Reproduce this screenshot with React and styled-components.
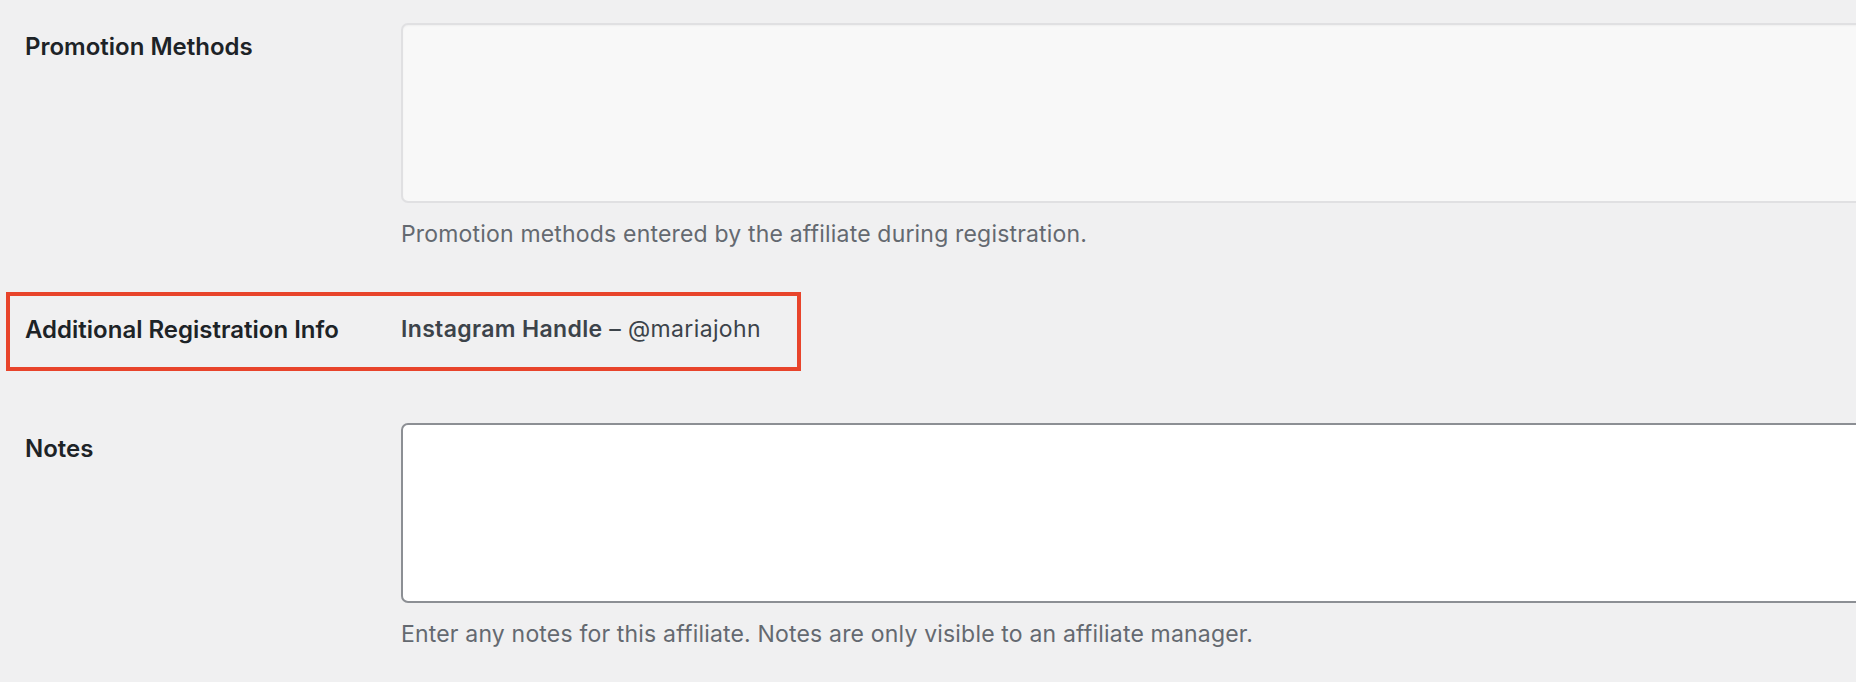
import React from 'react';
import styled, { createGlobalStyle } from 'styled-components';

const GlobalStyle = createGlobalStyle`
  html, body {
    margin: 0;
    padding: 0;
    background: #f0f0f1;
    overflow: hidden;
  }
  body {
    font-family: Inter, "Noto Sans", "Liberation Sans", sans-serif;
    -webkit-font-smoothing: antialiased;
  }
`;

const Page = styled.div`
  width: 1856px;
  height: 682px;
  overflow: hidden;
  padding-top: 22.7px;
  box-sizing: border-box;
`;

const FieldRow = styled.div`
  display: grid;
  grid-template-columns: 376px 1fr;
  padding-left: 25px;
`;

// the red annotation box around the extra registration info row
const HighlightRow = styled.div`
  display: grid;
  grid-template-columns: 376px 1fr;
  align-items: start;
  width: 795px;
  box-sizing: border-box;
  margin: 42px 0 52px 6px;
  padding: 18px 0 22px 15px;
  border: 4px solid #e8442b;
`;

const Label = styled.div`
  font-size: 24px;
  line-height: 31.2px;
  font-weight: 600;
  color: #1d2327;
  margin-top: ${p => p.$offset || 0}px;
`;

const Field = styled.div`
  display: flex;
  flex-direction: column;
  min-width: 0;
`;

const TextArea = styled.div`
  height: 180px;
  width: calc(100% + 40px);
  box-sizing: border-box;
  border-radius: 7px;
  border: 2px solid ${p => (p.$disabled ? 'rgba(220, 220, 222, 0.85)' : '#8c8f94')};
  background: ${p => (p.$disabled ? '#f8f8f8' : '#ffffff')};
  box-shadow: ${p => (p.$disabled ? 'inset 0 1px 2px rgba(0, 0, 0, 0.04)' : 'none')};
`;

const Description = styled.p`
  margin: 16px 0 0;
  font-size: 23px;
  line-height: 31.5px;
  letter-spacing: 0.18px;
  color: #646970;
`;

const Value = styled.div`
  font-size: 23px;
  line-height: 31.2px;
  letter-spacing: 0.35px;
  color: #3c434a;

  strong {
    font-weight: 600;
  }
`;

export default function App() {
  return (
    <>
      <GlobalStyle />
      <Page>
        <FieldRow>
          <Label $offset={8}>Promotion Methods</Label>
          <Field>
            <TextArea $disabled />
            <Description>Promotion methods entered by the affiliate during registration.</Description>
          </Field>
        </FieldRow>

        <HighlightRow>
          <Label>Additional Registration Info</Label>
          <Value>
            <strong>Instagram Handle</strong> – @mariajohn
          </Value>
        </HighlightRow>

        <FieldRow>
          <Label $offset={10}>Notes</Label>
          <Field>
            <TextArea />
            <Description>Enter any notes for this affiliate. Notes are only visible to an affiliate manager.</Description>
          </Field>
        </FieldRow>
      </Page>
    </>
  );
}
